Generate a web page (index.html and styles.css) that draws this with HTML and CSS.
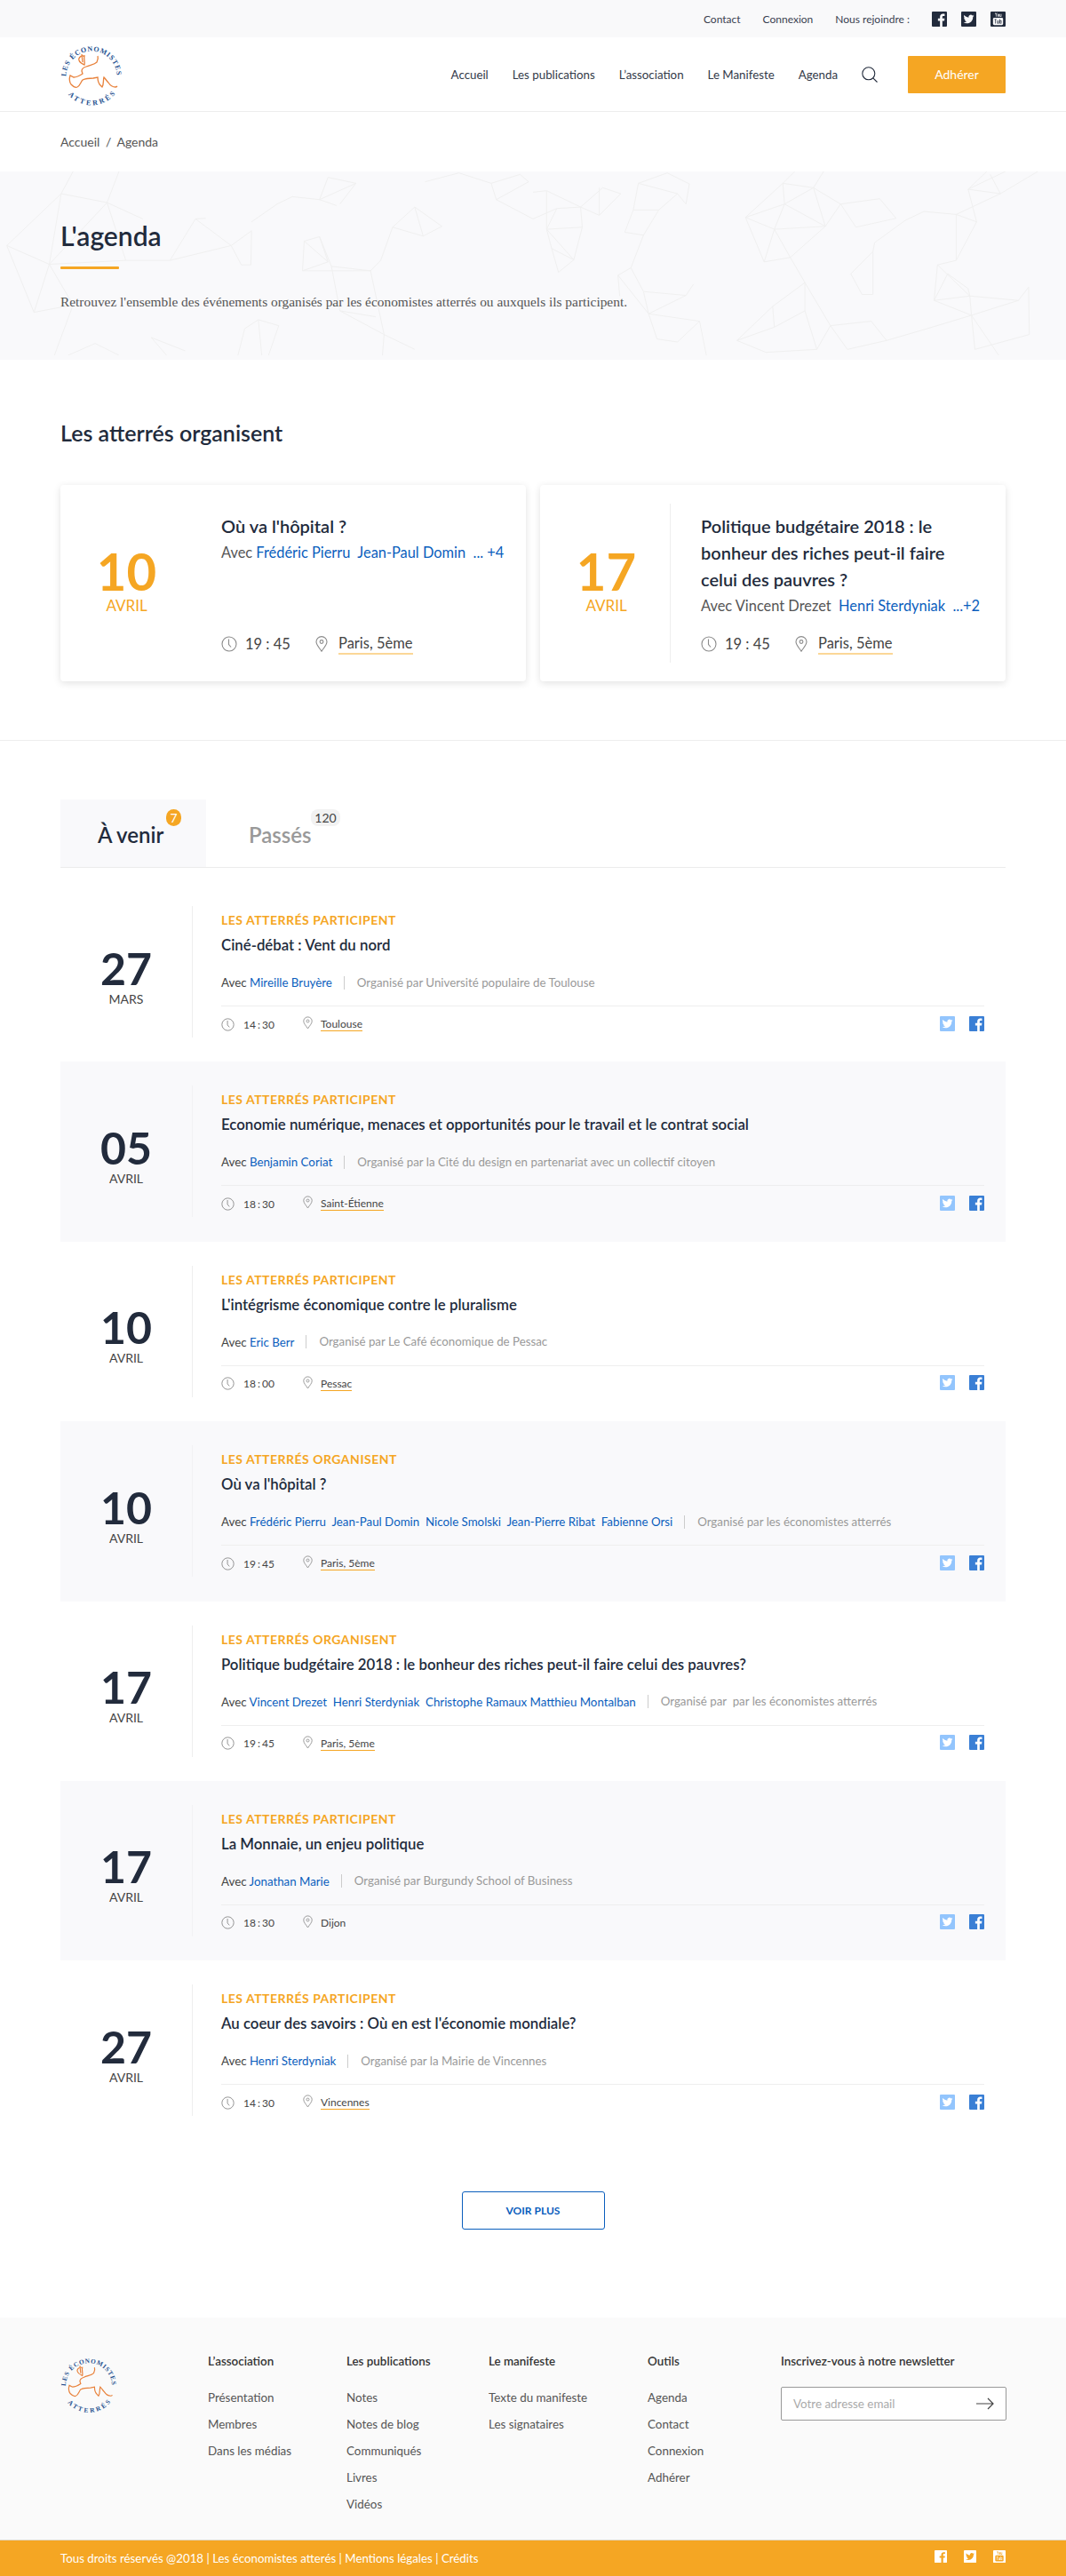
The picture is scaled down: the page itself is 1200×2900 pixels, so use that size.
FILE: index.html
```html
<!DOCTYPE html>
<html lang="fr">
<head>
<meta charset="utf-8">
<title>L'agenda - Les économistes atterrés</title>
<link rel="stylesheet" href="styles.css">
</head>
<body>
<svg class="sprite" width="0" height="0" aria-hidden="true">
  <symbol id="i-fb" viewBox="0 0 24 24"><rect width="24" height="24" rx="1.5" fill="currentColor"/><path class="cut" d="M16.7 24v-9.3h3.1l.5-3.6h-3.6V8.8c0-1 .3-1.8 1.8-1.8h1.9V3.8c-.3 0-1.5-.1-2.8-.1-2.8 0-4.7 1.7-4.7 4.8v2.6H9.7v3.6h3.2V24z"/></symbol>
  <symbol id="i-tw" viewBox="0 0 24 24"><rect width="24" height="24" rx="1.5" fill="currentColor"/><path class="cut" transform="translate(3.6 3.6) scale(.7)" d="M23.953 4.57a10 10 0 01-2.825.775 4.958 4.958 0 002.163-2.723c-.951.555-2.005.959-3.127 1.184a4.92 4.92 0 00-8.384 4.482C7.69 8.095 4.067 6.13 1.64 3.162a4.822 4.822 0 00-.666 2.475c0 1.71.87 3.213 2.188 4.096a4.904 4.904 0 01-2.228-.616v.06a4.923 4.923 0 003.946 4.827 4.996 4.996 0 01-2.212.085 4.936 4.936 0 004.604 3.417 9.867 9.867 0 01-6.102 2.105c-.39 0-.779-.023-1.17-.067a13.995 13.995 0 007.557 2.209c9.053 0 13.998-7.496 13.998-13.985 0-.21 0-.42-.015-.63A9.935 9.935 0 0024 4.59z"/></symbol>
  <symbol id="i-yt" viewBox="0 0 24 24"><rect width="24" height="24" rx="1.5" fill="currentColor"/><path class="cut" d="M7 2l1.4 3V8h1V5l1.4-3h-1L9 3.8 8 2zM11.5 4h2v4h-2zM14.5 4h1v3h1V4h1v4h-3z"/><rect class="cut" x="4" y="10" width="16" height="11.5" rx="2"/><path class="ink" d="M6.5 12h3v1h-1v6h-1v-6h-1zM10.5 14h1v4h1v-4h1v5h-3zM14.5 12h1v2h2v5h-3zM15.5 15v3h1v-3z"/></symbol>
  <symbol id="i-clock" viewBox="0 0 18 18"><circle cx="9" cy="9" r="8" fill="none" stroke="#8b8b8b" stroke-width="1.1"/><path d="M8.5 3.6V9.5l2.6 3" fill="none" stroke="#8b8b8b" stroke-width="1.1"/></symbol>
  <symbol id="i-pin" viewBox="0 0 14 18"><path d="M7 17.2C4.4 13.2 1 10 1 6.6A6 6 0 0 1 13 6.6C13 10 9.6 13.2 7 17.2z" fill="none" stroke="#8b8b8b" stroke-width="1.1"/><circle cx="7" cy="6.5" r="1.9" fill="none" stroke="#8b8b8b" stroke-width="1.1"/></symbol>
</svg>

<div class="topbar">
  <div class="wrap topbar-in">
    <a class="toplink">Contact</a>
    <a class="toplink">Connexion</a>
    <span class="toplink join">Nous rejoindre :</span>
    <svg class="ic17"><use href="#i-fb"/></svg>
    <svg class="ic17"><use href="#i-tw"/></svg>
    <svg class="ic17"><use href="#i-yt"/></svg>
  </div>
</div>

<header class="header">
  <div class="wrap header-in">
    <svg class="logo" viewBox="0 0 70 73">
      <path id="arc-top" d="M6.5 39A28.5 28.5 0 1 1 63.5 39" fill="none"/>
      <path id="arc-bot" d="M7 57A34.4 34.4 0 0 0 63 57" fill="none"/>
      <text class="logo-text"><textPath href="#arc-top" textLength="88" lengthAdjust="spacing">LES ÉCONOMISTES</textPath></text>
      <text class="logo-text"><textPath href="#arc-bot" startOffset="3" textLength="60" lengthAdjust="spacing">ATTERRÉS</textPath></text>
      <path d="M42 16c1 3-1 7-1 7-3 3-8 3-12 5-3 1-5 3-5 5l1 3c-3 2-7 4-10 4l-4-2c-1 3-1 7 1 10 2 2 5 4 7 3 3-1 4-6 6-8 4-2 8-2 12-2l5-1c0 3 1 7 3 9l2 2c2-3 1-8 2-11 2 2 3 4 5 6 2 3 5 5 8 5 1 0 2-1 2-1" fill="none" stroke="#e8813a" stroke-width="1.3"/>
      <path d="M25 16c-3 0-5 3-4 5 1 3 4 4 6 5 1-3-1-7 0-10zM24 14l1 9" fill="none" stroke="#e8813a" stroke-width="1.3"/>
    </svg>
    <nav class="nav">
      <a>Accueil</a><a>Les publications</a><a>L’association</a><a>Le Manifeste</a><a class="last">Agenda</a>
    </nav>
    <svg class="search" viewBox="0 0 18 18"><circle cx="7.8" cy="7.8" r="7" fill="none" stroke="#222b3c" stroke-width="1.1"/><path d="M12.8 12.8L17.5 17.5" stroke="#222b3c" stroke-width="1.1"/></svg>
    <a class="join-btn">Adhérer</a>
  </div>
</header>

<div class="crumbs"><div class="wrap">Accueil <span class="sl">/</span> Agenda</div></div>

<section class="hero">
  <svg class="mesh" viewBox="0 580 3136 620" preserveAspectRatio="none" aria-hidden="true">
    <path d="M20 830L180 655 315 685 370 880 145 893 20 830M180 655L145 893M315 685L145 893M20 830L100 1055 145 893M100 1055L215 1030 145 893M180 655L215 580M315 685L350 580M315 685L420 740M370 880H500L680 830 575 740 605 738M500 880L575 740M680 830L740 780 738 895H710L680 830M740 750L815 690 860 665 940 675 990 695M940 675L965 600 1047 620M940 675L1047 620 1000 690M1220 700L1155 768 1245 798 1300 765 1220 700 1245 798M895 815L965 885 890 915 895 815M965 885L940 800 895 815M940 800L975 900 1090 915 1120 880 1155 768M890 915L1090 915 1130 1130 1125 1200M975 900L1000 1050 1105 1070M720 1110L760 1080 820 1100 790 1200M720 1110L700 1200M760 1080L770 1200M445 1140L545 1185M445 1140L490 1200M280 1160L200 1200M280 1160L350 1200M215 1030L160 1200M1445 620L1530 590 1555 615 1460 675 1445 620M1460 675L1568 740M1250 615L1350 585 1445 620M1000 1050L1130 1130 1220 1180"/>
    <path transform="translate(1568 0)" d="M0 650L40 645 140 700 70 705 0 740M40 645L40 775 145 768 140 700M70 705L40 775 55 840 120 878 145 768M40 775L120 878M55 840L75 920 120 878M140 700L195 728 258 655 205 635 140 700M195 635V728M310 620L395 585 460 622 450 690 425 655 310 620M310 620L295 710H370L425 655M295 710L270 785 325 795 370 710M325 795L288 905 250 930 255 1000M288 905L325 985 450 998 472 960M325 985L340 1060 450 998M250 930L340 1060 490 1085 510 1200M340 1060L365 1145 425 1155 490 1085M625 735L735 620 825 635 905 690 1020 672 1068 738 950 768 905 690 860 765 825 635 740 690 625 735M625 735L710 775 860 765M710 775L740 690 860 765M625 735L680 885 757 870 710 775 680 885M757 870L860 765M757 870L800 955 875 1100 995 1085 1040 1150 925 1180 875 1100M800 955L705 1035 600 1150 685 1190 835 1180 875 1100M705 1035L710 1105 600 1150M710 1105L800 1050 835 1180M800 955V1050M735 620L740 690M735 620L770 580M825 635L855 580M1095 745L1150 715 1245 725 1305 750 1245 880V725M1095 745L1005 820 1000 850 935 925 968 995H1000V850M1245 725L1375 655 1280 640 1305 750M1375 655L1485 580M1280 640L1390 580M1280 640L1335 580M1375 655L1345 590M1245 880L1190 895 1285 1000 1280 975 1220 925 1180 1015 1285 1000 1428 1015 1290 1065 1180 1015M1190 895L1180 1015M1285 1000L1290 1065 1300 1180 1460 1130 1458 970 1428 1015M1290 1065L1160 1110 1040 1150M1290 1065L1370 1200"/>
  </svg>
  <div class="wrap hero-in">
    <h1 class="hero-title">L'agenda</h1>
    <div class="hero-bar"></div>
    <p class="hero-desc">Retrouvez l'ensemble des événements organisés par les économistes atterrés ou auxquels ils participent.</p>
  </div>
</section>

<section class="featured">
  <div class="wrap">
    <h2 class="section-title">Les atterrés organisent</h2>
    <div class="cards">
      <article class="card">
        <div class="card-date no-rule"><span class="card-day">10</span><span class="card-month">AVRIL</span></div>
        <div class="card-body">
          <h3 class="card-title">Où va l'hôpital ?</h3>
          <p class="card-with">Avec <a>Frédéric Pierru</a>&nbsp; <a>Jean-Paul Domin</a>&nbsp; <a>... +4</a></p>
          <div class="card-foot">
            <svg class="card-ic"><use href="#i-clock"/></svg><span class="card-time">19 : 45</span>
            <svg class="card-pin"><use href="#i-pin"/></svg><span class="card-place">Paris, 5ème</span>
          </div>
        </div>
      </article>
      <article class="card">
        <div class="card-date"><span class="card-day">17</span><span class="card-month">AVRIL</span></div>
        <div class="card-body">
          <h3 class="card-title">Politique budgétaire 2018 : le bonheur des riches peut-il faire celui des pauvres ?</h3>
          <p class="card-with">Avec Vincent Drezet&nbsp; <a>Henri Sterdyniak</a>&nbsp; <a>...+2</a></p>
          <div class="card-foot">
            <svg class="card-ic"><use href="#i-clock"/></svg><span class="card-time">19 : 45</span>
            <svg class="card-pin"><use href="#i-pin"/></svg><span class="card-place">Paris, 5ème</span>
          </div>
        </div>
      </article>
    </div>
  </div>
</section>

<main class="wrap agenda">
  <div class="tabs">
    <a class="tab active">À venir<span class="badge orange">7</span></a>
    <a class="tab">Passés<span class="badge grey">120</span></a>
  </div>

  <article class="event">
    <div class="date"><span class="day">27</span><span class="month">MARS</span></div>
    <div class="ev-body">
      <div class="ev-label">LES ATTERRÉS PARTICIPENT</div>
      <h3 class="ev-title">Ciné-débat : Vent du nord</h3>
      <p class="ev-meta"><span>Avec <a>Mireille Bruyère</a></span><span class="org">Organisé par Université populaire de Toulouse</span></p>
      <div class="ev-foot">
        <svg class="foot-ic"><use href="#i-clock"/></svg><span class="time">14 : 30</span>
        <svg class="foot-pin"><use href="#i-pin"/></svg><span class="place">Toulouse</span>
        <span class="share"><svg class="tw"><use href="#i-tw"/></svg><svg class="fb"><use href="#i-fb"/></svg></span>
      </div>
    </div>
  </article>

  <article class="event alt">
    <div class="date"><span class="day">05</span><span class="month">AVRIL</span></div>
    <div class="ev-body">
      <div class="ev-label">LES ATTERRÉS PARTICIPENT</div>
      <h3 class="ev-title">Economie numérique, menaces et opportunités pour le travail et le contrat social</h3>
      <p class="ev-meta"><span>Avec <a>Benjamin Coriat</a></span><span class="org">Organisé par la Cité du design en partenariat avec un collectif citoyen</span></p>
      <div class="ev-foot">
        <svg class="foot-ic"><use href="#i-clock"/></svg><span class="time">18 : 30</span>
        <svg class="foot-pin"><use href="#i-pin"/></svg><span class="place">Saint-Étienne</span>
        <span class="share"><svg class="tw"><use href="#i-tw"/></svg><svg class="fb"><use href="#i-fb"/></svg></span>
      </div>
    </div>
  </article>

  <article class="event">
    <div class="date"><span class="day">10</span><span class="month">AVRIL</span></div>
    <div class="ev-body">
      <div class="ev-label">LES ATTERRÉS PARTICIPENT</div>
      <h3 class="ev-title">L'intégrisme économique contre le pluralisme</h3>
      <p class="ev-meta"><span>Avec <a>Eric Berr</a></span><span class="org">Organisé par Le Café économique de Pessac</span></p>
      <div class="ev-foot">
        <svg class="foot-ic"><use href="#i-clock"/></svg><span class="time">18 : 00</span>
        <svg class="foot-pin"><use href="#i-pin"/></svg><span class="place">Pessac</span>
        <span class="share"><svg class="tw"><use href="#i-tw"/></svg><svg class="fb"><use href="#i-fb"/></svg></span>
      </div>
    </div>
  </article>

  <article class="event alt">
    <div class="date"><span class="day">10</span><span class="month">AVRIL</span></div>
    <div class="ev-body">
      <div class="ev-label">LES ATTERRÉS ORGANISENT</div>
      <h3 class="ev-title">Où va l'hôpital ?</h3>
      <p class="ev-meta"><span>Avec <a>Frédéric Pierru</a>&nbsp; <a>Jean-Paul Domin</a>&nbsp; <a>Nicole Smolski</a>&nbsp; <a>Jean-Pierre Ribat</a>&nbsp; <a>Fabienne Orsi</a></span><span class="org">Organisé par les économistes atterrés</span></p>
      <div class="ev-foot">
        <svg class="foot-ic"><use href="#i-clock"/></svg><span class="time">19 : 45</span>
        <svg class="foot-pin"><use href="#i-pin"/></svg><span class="place">Paris, 5ème</span>
        <span class="share"><svg class="tw"><use href="#i-tw"/></svg><svg class="fb"><use href="#i-fb"/></svg></span>
      </div>
    </div>
  </article>

  <article class="event">
    <div class="date"><span class="day">17</span><span class="month">AVRIL</span></div>
    <div class="ev-body">
      <div class="ev-label">LES ATTERRÉS ORGANISENT</div>
      <h3 class="ev-title">Politique budgétaire 2018 : le bonheur des riches peut-il faire celui des pauvres?</h3>
      <p class="ev-meta"><span>Avec <a>Vincent Drezet</a>&nbsp; <a>Henri Sterdyniak</a>&nbsp; <a>Christophe Ramaux</a> <a>Matthieu Montalban</a></span><span class="org">Organisé par&nbsp; par les économistes atterrés</span></p>
      <div class="ev-foot">
        <svg class="foot-ic"><use href="#i-clock"/></svg><span class="time">19 : 45</span>
        <svg class="foot-pin"><use href="#i-pin"/></svg><span class="place">Paris, 5ème</span>
        <span class="share"><svg class="tw"><use href="#i-tw"/></svg><svg class="fb"><use href="#i-fb"/></svg></span>
      </div>
    </div>
  </article>

  <article class="event alt">
    <div class="date"><span class="day">17</span><span class="month">AVRIL</span></div>
    <div class="ev-body">
      <div class="ev-label">LES ATTERRÉS PARTICIPENT</div>
      <h3 class="ev-title">La Monnaie, un enjeu politique</h3>
      <p class="ev-meta"><span>Avec <a>Jonathan Marie</a></span><span class="org">Organisé par Burgundy School of Business</span></p>
      <div class="ev-foot">
        <svg class="foot-ic"><use href="#i-clock"/></svg><span class="time">18 : 30</span>
        <svg class="foot-pin"><use href="#i-pin"/></svg><span class="place plain">Dijon</span>
        <span class="share"><svg class="tw"><use href="#i-tw"/></svg><svg class="fb"><use href="#i-fb"/></svg></span>
      </div>
    </div>
  </article>

  <article class="event">
    <div class="date"><span class="day">27</span><span class="month">AVRIL</span></div>
    <div class="ev-body">
      <div class="ev-label">LES ATTERRÉS PARTICIPENT</div>
      <h3 class="ev-title">Au coeur des savoirs : Où en est l'économie mondiale?</h3>
      <p class="ev-meta"><span>Avec <a>Henri Sterdyniak</a></span><span class="org">Organisé par la Mairie de Vincennes</span></p>
      <div class="ev-foot">
        <svg class="foot-ic"><use href="#i-clock"/></svg><span class="time">14 : 30</span>
        <svg class="foot-pin"><use href="#i-pin"/></svg><span class="place">Vincennes</span>
        <span class="share"><svg class="tw"><use href="#i-tw"/></svg><svg class="fb"><use href="#i-fb"/></svg></span>
      </div>
    </div>
  </article>

  <div class="more"><a class="more-btn">VOIR PLUS</a></div>
</main>

<footer class="footer">
  <div class="wrap footer-in">
    <svg class="foot-logo" viewBox="0 0 70 73">
      <path id="arc-top-f" d="M6.5 39A28.5 28.5 0 1 1 63.5 39" fill="none"/>
      <path id="arc-bot-f" d="M7 57A34.4 34.4 0 0 0 63 57" fill="none"/>
      <text class="logo-text"><textPath href="#arc-top-f" textLength="88" lengthAdjust="spacing">LES ÉCONOMISTES</textPath></text>
      <text class="logo-text"><textPath href="#arc-bot-f" startOffset="3" textLength="60" lengthAdjust="spacing">ATTERRÉS</textPath></text>
      <path d="M42 16c1 3-1 7-1 7-3 3-8 3-12 5-3 1-5 3-5 5l1 3c-3 2-7 4-10 4l-4-2c-1 3-1 7 1 10 2 2 5 4 7 3 3-1 4-6 6-8 4-2 8-2 12-2l5-1c0 3 1 7 3 9l2 2c2-3 1-8 2-11 2 2 3 4 5 6 2 3 5 5 8 5 1 0 2-1 2-1" fill="none" stroke="#e8813a" stroke-width="1.3"/>
      <path d="M25 16c-3 0-5 3-4 5 1 3 4 4 6 5 1-3-1-7 0-10zM24 14l1 9" fill="none" stroke="#e8813a" stroke-width="1.3"/>
    </svg>
    <div class="fcol c1"><h4>L’association</h4><a>Présentation</a><a>Membres</a><a>Dans les médias</a></div>
    <div class="fcol c2"><h4>Les publications</h4><a>Notes</a><a>Notes de blog</a><a>Communiqués</a><a>Livres</a><a>Vidéos</a></div>
    <div class="fcol c3"><h4>Le manifeste</h4><a>Texte du manifeste</a><a>Les signataires</a></div>
    <div class="fcol c4"><h4>Outils</h4><a>Agenda</a><a>Contact</a><a>Connexion</a><a>Adhérer</a></div>
    <div class="fcol c5">
      <h4>Inscrivez-vous à notre newsletter</h4>
      <div class="news"><span>Votre adresse email</span>
        <svg class="arrow" viewBox="0 0 20 14"><path d="M0 7H19M13 1l6 6-6 6" fill="none" stroke="#444" stroke-width="1.2"/></svg>
      </div>
    </div>
  </div>
</footer>
<div class="legal">
  <div class="wrap legal-in">
    <span>Tous droits réservés @2018 | Les économistes atterés | Mentions légales | Crédits</span>
    <span class="legal-ic">
      <svg><use href="#i-fb"/></svg><svg><use href="#i-tw"/></svg><svg><use href="#i-yt"/></svg>
    </span>
  </div>
</div>
</body>
</html>
```

FILE: styles.css
```css
* { box-sizing: border-box; }
html, body { margin: 0; padding: 0; }
body { font-family: Lato, "Liberation Sans", sans-serif; color: #222b3c; background: #fff; font-size: 14px; }
h1, h2, h3, h4, p { margin: 0; }
.sprite { position: absolute; }
.cut { fill: var(--cut, #fff); }
.ink { fill: var(--ink, #222b3c); }
.wrap { width: 1064px; margin: 0 auto; }

.topbar { height: 42px; background: #f9f9fa; --cut: #f9f9fa; }
.topbar-in { display: flex; align-items: center; justify-content: flex-end; height: 42px; }
.toplink { font-size: 12px; color: #3a4150; margin-right: 25px; }
.ic17 { width: 17px; height: 17px; margin-left: 16px; color: #222b3c; }
.ic17:first-of-type { margin-left: 0; }

.header { height: 84px; border-bottom: 1px solid #ededed; }
.header-in { display: flex; align-items: center; height: 83px; }
.logo { width: 70px; height: 73px; overflow: visible; }
.logo-text { font-family: "Liberation Serif", serif; font-size: 8px; font-weight: 700; fill: #24508f; }
.nav { margin-left: auto; display: flex; font-size: 13.3px; color: #333a49; }
.nav a { margin-right: 27px; }
.nav a.last { margin-right: 0; }
.search { width: 18px; height: 18px; margin: 0 34px 0 27px; }
.join-btn { width: 110px; height: 42px; background: #f5a623; color: #fff; display: flex; align-items: center; justify-content: center; font-size: 14px; border-radius: 1px; }

.crumbs { height: 67px; display: flex; align-items: center; color: #555; font-size: 14px; }
.sl { margin: 0 3px; }

.hero { height: 212px; background: #f9f9fb; position: relative; overflow: hidden; }
.mesh { position: absolute; left: 0; top: 0; width: 1200px; height: 207px; }
.mesh path { fill: none; stroke: #f0f0f0; stroke-width: 1; vector-effect: non-scaling-stroke; }
.hero-in { position: relative; padding-top: 52px; }
.hero-title { font-size: 30px; line-height: 40px; font-weight: 600; color: #222b3c; }
.hero-bar { width: 66px; height: 3px; background: #f5a623; margin-top: 15px; border-radius: 1px; }
.hero-desc { margin-top: 27px; line-height: 20px; font-family: "Liberation Serif", serif; font-size: 15.4px; color: #555; }

.featured { padding: 67px 0 66px; border-bottom: 1px solid #eee; }
.section-title { font-size: 25px; line-height: 30px; font-weight: 600; color: #222b3c; }
.cards { display: flex; gap: 16px; margin-top: 44px; }
.card { width: 524px; height: 221px; background: #fff; border-radius: 4px; box-shadow: 0 2px 8px rgba(0,0,0,.12); display: flex; }
.card-date { flex: none; width: 147px; margin: 21px 0; border-right: 1px solid #eee; display: flex; flex-direction: column; align-items: center; justify-content: center; padding: 0 0 6px 3px; color: #f5a623; }
.card-date.no-rule { border-right-color: transparent; }
.card-day { font-size: 58px; line-height: 56px; font-weight: 700; }
.card-month { font-size: 17px; line-height: 22px; }
.card-body { flex: 1; min-width: 0; padding: 31px 24px 27px 34px; display: flex; flex-direction: column; }
.card-title { font-size: 20px; line-height: 30px; font-weight: 600; color: #222b3c; }
.card-with { font-size: 16.4px; line-height: 30px; color: #555; white-space: nowrap; }
.card-with a, .ev-meta a { color: #0a5ebd; }
.card-foot { margin-top: auto; display: flex; align-items: center; height: 30px; font-size: 16.5px; color: #444; }
.card-ic { width: 18px; height: 18px; margin-right: 9px; flex: none; }
.card-time { width: 79px; }
.card-pin { width: 14px; height: 18px; margin-right: 12px; flex: none; }
.card-place { line-height: 22px; border-bottom: 2px solid #fbd797; }

.agenda { padding-top: 66px; }
.tabs { display: flex; height: 77px; border-bottom: 1px solid #ececec; margin-bottom: 16px; }
.tab { position: relative; font-size: 24px; line-height: 80px; font-weight: 600; color: #999; }
.tab:first-child { width: 164px; padding-left: 42px; background: #f9f9fb; color: #222b3c; }
.tab:last-child { margin-left: 48px; }
.badge { position: absolute; top: 11px; font-size: 14px; line-height: 19px; font-weight: 400; height: 19px; text-align: center; }
.badge.orange { left: 119px; width: 17px; border-radius: 10px; background: #f5a623; color: #fff; }
.badge.grey { left: 70px; width: 33px; border-radius: 8px; background: #f2f2f2; color: #444; }

.event { display: flex; padding: 27px 24px 27.4px 0; }
.event.alt { background: #f9f9fb; }
.date { flex: none; width: 149px; height: 148px; border-right: 1px solid #eee; display: flex; flex-direction: column; align-items: center; justify-content: center; padding-top: 11px; }
.alt .date { border-right-color: #f2f2f4; }
.day { font-size: 50px; line-height: 50px; font-weight: 700; color: #222b3c; }
.month { font-size: 14px; line-height: 20px; color: #444; }
.ev-body { flex: 1; min-width: 0; margin-left: 32px; height: 148px; padding-top: 6px; }
.ev-label { font-size: 14px; line-height: 20px; font-weight: 700; color: #f5a623; letter-spacing: .5px; }
.ev-title { margin-top: 5px; font-size: 16.8px; line-height: 26px; font-weight: 600; color: #222b3c; white-space: nowrap; }
.ev-meta { margin-top: 19px; font-size: 13.3px; line-height: 20px; color: #444; display: flex; align-items: center; white-space: nowrap; }
.org { color: #999; margin-left: 13px; padding-left: 14px; border-left: 1px solid #ccc; line-height: 15px; }
.ev-foot { margin-top: 16px; border-top: 1px solid #eee; padding-top: 10px; display: flex; align-items: center; font-size: 12px; color: #444; box-sizing: content-box; height: 20px; }
.foot-ic { width: 15px; height: 15px; margin-right: 10px; flex: none; }
.time { width: 67px; font-size: 12px; word-spacing: -1px; }
.foot-pin { width: 11px; height: 15px; margin-right: 9px; margin-top: -3px; flex: none; }
.place { font-size: 12px; line-height: 15px; border-bottom: 1px solid #f5a623; }
.place.plain { border-bottom: 0; }
.share { margin-left: auto; display: flex; gap: 16px; margin-top: -2px; --cut: #fff; }
.share svg { width: 17px; height: 17px; display: block; }
.tw { color: #93c5fd; }
.fb { color: #3a7fd5; }

.more { display: flex; justify-content: center; padding-top: 57px; height: 199px; }
.more-btn { width: 161px; height: 43px; border: 1px solid #0a5ebd; border-radius: 3px; color: #0a5ebd; font-size: 12px; font-weight: 700; display: flex; align-items: center; justify-content: center; }

.footer { height: 250px; background: #fafafa; }
.footer-in { position: relative; display: flex; height: 250px; padding-top: 39px; }
.foot-logo { width: 64px; height: 68px; margin-top: 2px; flex: none; overflow: visible; }
.fcol { flex: none; }
.fcol h4 { font-size: 13.4px; line-height: 20px; font-weight: 600; color: #333; margin-bottom: 21px; }
.fcol a { display: block; font-size: 13.4px; line-height: 20px; color: #555; margin-bottom: 10px; }
.c1 { margin-left: 102px; width: 156px; }
.c2 { width: 160px; }
.c3 { width: 179px; }
.c4 { width: 150px; }
.c5 { width: 254px; }
.c5 h4 { margin-bottom: 19px; white-space: nowrap; }
.news { height: 38px; border: 1px solid #999; border-radius: 2px; background: #fff; display: flex; align-items: center; justify-content: space-between; padding: 0 13px; color: #aaa; font-size: 13.4px; }
.arrow { width: 20px; height: 14px; }

.legal { height: 41px; background: #f5a623; color: #fff; border-top: 1px solid #e0d9c8; --cut: #f5a623; --ink: #fff; }
.legal-in { display: flex; justify-content: space-between; align-items: center; height: 40px; font-size: 13.3px; }
.legal-ic { display: flex; gap: 19px; margin-top: -3px; color: #fff; --ink: #fff; }
.legal-ic svg { width: 14px; height: 14px; display: block; }
```
